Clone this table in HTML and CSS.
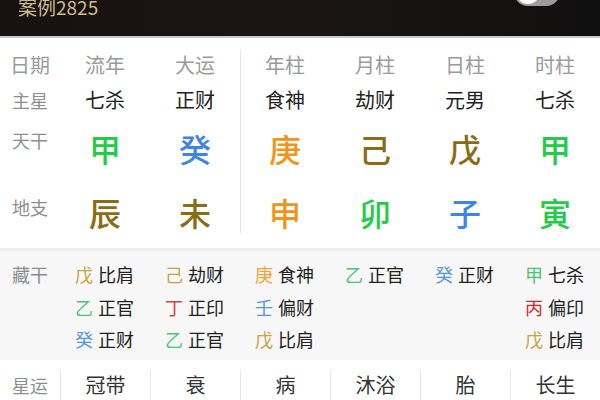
FILE: index.html
```html
<!DOCTYPE html>
<html lang="zh">
<head>
<meta charset="utf-8">
<link rel="stylesheet" href="styles.css">
</head>
<body>
<header class="topbar">
  <span class="case">案例2825</span>
  <span class="switch"><span class="knob"></span></span>
</header>
<section class="pillars">
  <div class="vdiv"></div>
  <div class="cell lab hd">日期</div>
  <div class="cell hd">流年</div>
  <div class="cell hd">大运</div>
  <div class="cell hd">年柱</div>
  <div class="cell hd">月柱</div>
  <div class="cell hd">日柱</div>
  <div class="cell hd">时柱</div>

  <div class="cell lab star">主星</div>
  <div class="cell star">七杀</div>
  <div class="cell star">正财</div>
  <div class="cell star">食神</div>
  <div class="cell star">劫财</div>
  <div class="cell star">元男</div>
  <div class="cell star">七杀</div>

  <div class="cell lab gan">天干</div>
  <div class="cell big gan c-green">甲</div>
  <div class="cell big gan c-blue">癸</div>
  <div class="cell big gan c-orange">庚</div>
  <div class="cell big gan c-olive">己</div>
  <div class="cell big gan c-olive">戊</div>
  <div class="cell big gan c-green">甲</div>

  <div class="cell lab zhi">地支</div>
  <div class="cell big zhi c-olive">辰</div>
  <div class="cell big zhi c-olive">未</div>
  <div class="cell big zhi c-orange">申</div>
  <div class="cell big zhi c-green">卯</div>
  <div class="cell big zhi c-blue">子</div>
  <div class="cell big zhi c-green">寅</div>
</section>
<section class="hidden">
  <div class="hlab">藏干</div>
  <div class="hcol">
    <div class="hi"><span class="s-yel">戊</span>比肩</div>
    <div class="hi"><span class="s-grn">乙</span>正官</div>
    <div class="hi"><span class="s-blu">癸</span>正财</div>
  </div>
  <div class="hcol">
    <div class="hi"><span class="s-yel">己</span>劫财</div>
    <div class="hi"><span class="s-red">丁</span>正印</div>
    <div class="hi"><span class="s-grn">乙</span>正官</div>
  </div>
  <div class="hcol">
    <div class="hi"><span class="s-org">庚</span>食神</div>
    <div class="hi"><span class="s-blu">壬</span>偏财</div>
    <div class="hi"><span class="s-yel">戊</span>比肩</div>
  </div>
  <div class="hcol">
    <div class="hi"><span class="s-grn">乙</span>正官</div>
  </div>
  <div class="hcol">
    <div class="hi"><span class="s-blu">癸</span>正财</div>
  </div>
  <div class="hcol">
    <div class="hi"><span class="s-grn">甲</span>七杀</div>
    <div class="hi"><span class="s-red2">丙</span>偏印</div>
    <div class="hi"><span class="s-yel">戊</span>比肩</div>
  </div>
</section>
<section class="luck">
  <div class="lcell llab">星运</div>
  <div class="lcell">冠带</div>
  <div class="lcell">衰</div>
  <div class="lcell">病</div>
  <div class="lcell">沐浴</div>
  <div class="lcell">胎</div>
  <div class="lcell">长生</div>
</section>
</body>
</html>
```
FILE: styles.css
```css
* { box-sizing: border-box; }
html, body { margin: 0; padding: 0; }
body {
  width: 600px;
  height: 400px;
  overflow: hidden;
  background: #ffffff;
  font-family: "Noto Sans CJK SC", "Noto Sans", sans-serif;
}
.topbar {
  height: 38px;
  background: linear-gradient(90deg, #17120f 0%, #1a1512 50%, #111010 100%);
  border-bottom: 2px solid #c9c9c9;
  display: flex;
  align-items: flex-start;
  justify-content: space-between;
  padding: 0 40px 0 18px;
}
.case {
  color: #cdbb92;
  font-size: 19px;
  line-height: 19px;
  margin-top: -3px;
}
.switch {
  width: 46px;
  height: 28px;
  margin-top: -22px;
  border-radius: 14px;
  background: #9c9c9c;
  display: flex;
  align-items: center;
  padding: 2px;
}
.knob {
  width: 24px;
  height: 24px;
  border-radius: 50%;
  background: #ffffff;
}
.pillars {
  display: grid;
  grid-template-columns: 60px repeat(6, 90px);
  grid-template-rows: 30px 40px 56px 72px;
  padding-top: 12px;
  height: 210px;
}
.vdiv {
  grid-column: 4;
  grid-row: 1 / 5;
  border-left: 1px solid #e4e4e4;
  margin-bottom: 15px;
}
.cell {
  display: flex;
  align-items: center;
  justify-content: center;
  line-height: 1;
}
.cell:nth-child(7n+5) { grid-column: 4; }
.hd { font-size: 20px; color: #9a9a9a; grid-row: 1; }
.star { font-size: 20px; color: #222; grid-row: 2; }
.gan { grid-row: 3; }
.zhi { grid-row: 4; }
.lab { grid-column: 1; font-size: 18px; color: #8e8e8e; }
.lab.hd { font-size: 20px; color: #9a9a9a; }
.lab.gan { padding-bottom: 16px; }
.lab.zhi { padding-bottom: 10px; }
.big { font-size: 32px; font-weight: 500; }
.c-green { color: #22cc47; }
.c-blue { color: #3d84e6; }
.c-orange { color: #f0951c; }
.c-olive { color: #8a6c14; }

.hidden {
  display: grid;
  grid-template-columns: 60px repeat(6, 90px);
  background: #f7f7f7;
  border-top: 3px solid #ececec;
  padding-top: 7px;
  height: 112px;
}
.hlab {
  font-size: 18px;
  color: #8e8e8e;
  text-align: center;
  line-height: 32px;
}
.hcol {
  padding-left: 15px;
}
.hi {
  height: 32.5px;
  line-height: 32.5px;
  font-size: 18px;
  color: #222;
  white-space: nowrap;
}
.hi span { margin-right: 5px; }
.s-yel { color: #c4a445; }
.s-grn { color: #4ec276; }
.s-blu { color: #5596e0; }
.s-red { color: #d2443c; }
.s-red2 { color: #d3262b; }
.s-org { color: #f0a233; }

.luck {
  display: grid;
  grid-template-columns: 60px repeat(6, 90px);
  padding-top: 10px;
  background: #ffffff;
}
.lcell {
  height: 30px;
  display: flex;
  align-items: center;
  justify-content: center;
  font-size: 20px;
  color: #333;
  border-left: 1px solid #e6e6e6;
  line-height: 1;
}
.llab {
  border-left: none;
  font-size: 18px;
  color: #8e8e8e;
}
```
